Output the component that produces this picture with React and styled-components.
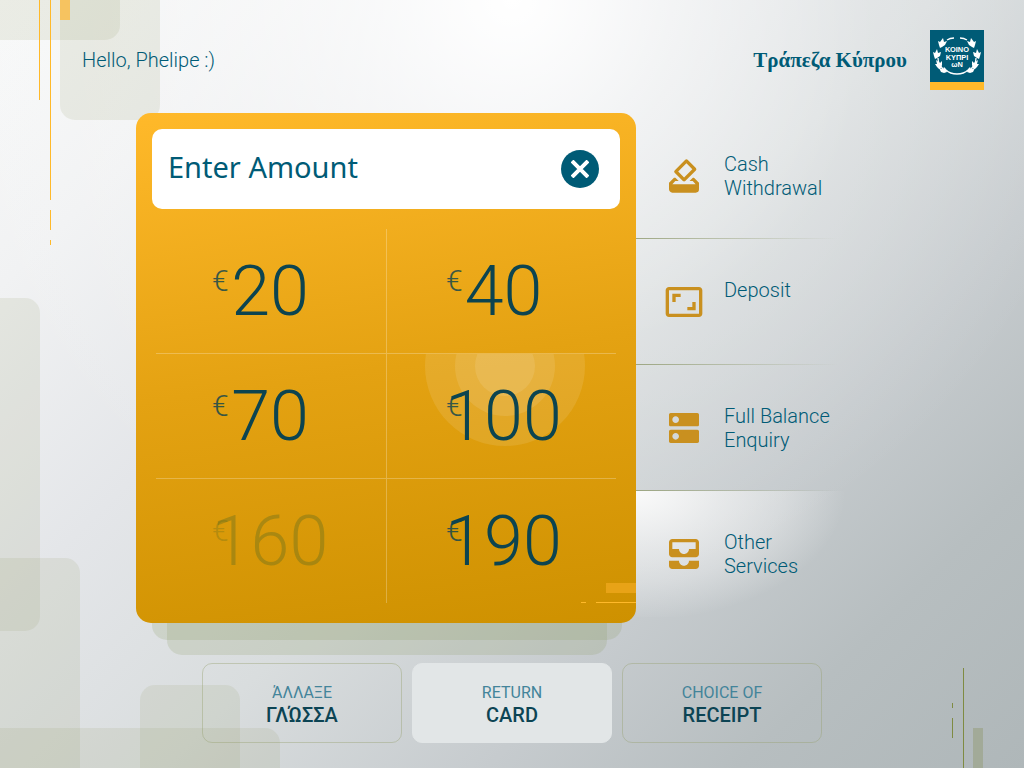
import React, { useState } from "react";
import styled, { createGlobalStyle } from "styled-components";
import {
  MdHowToVote,
  MdAspectRatio,
  MdDns,
  MdAllInbox
} from "react-icons/md";

const GlobalStyle = createGlobalStyle`
  * {
    box-sizing: border-box;
  }
  body {
    margin: 0;
    font-family: Roboto, "Noto Sans", sans-serif;
    color: #005b76;
  }
  button,
  input {
    font-family: inherit;
    color: inherit;
    border: none;
    background: none;
    padding: 0;
    margin: 0;
  }
  button {
    cursor: pointer;
  }
`;

const Screen = styled.div`
  position: relative;
  isolation: isolate;
  overflow: hidden;
  min-height: 100vh;
  background: radial-gradient(
      circle at 50% 0,
      rgba(255, 255, 255, 1) 0%,
      rgba(255, 255, 255, 0.6) 160px,
      rgba(255, 255, 255, 0.2) 360px,
      rgba(255, 255, 255, 0) 600px
    ),
    linear-gradient(
      135deg,
      #f8f9f9 0%,
      #f1f2f3 16%,
      #e4e6e9 34%,
      #d9ddde 52%,
      #c6cbce 70%,
      #b7bec0 84%,
      #afb7b9 100%
    );
`;

/* corner artwork behind the page */
const Artwork = styled.svg`
  position: absolute;
  z-index: -1;
  ${props => (props.$right ? "right: 0;" : "left: 0;")}
  ${props => (props.$bottom ? "bottom: 0;" : "top: 0;")}
`;

const Header = styled.header`
  display: flex;
  justify-content: space-between;
  align-items: center;
  padding: 30px 40px 0 82px;
  margin-bottom: 23px;
`;
const Greeting = styled.p`
  margin: 0;
  font-size: 20px;
  font-weight: 300;
  line-height: 24px;
`;
const Brand = styled.div`
  display: flex;
  align-items: center;
  gap: 23px;
`;
const BrandName = styled.span`
  font-family: "Liberation Serif", serif;
  font-size: 21px;
  font-weight: 700;
  line-height: 24px;
`;
const Emblem = styled.svg`
  display: block;
  width: 54px;
  height: 60px;
`;

const Main = styled.main`
  display: flex;
  justify-content: center;
  align-items: flex-start;
`;
const CardWrap = styled.div`
  position: relative;
  isolation: isolate;
  flex: 0 1 500px;
  min-width: 0;
  &::before,
  &::after {
    content: "";
    position: absolute;
    z-index: -1;
    height: 60px;
    border-radius: 15px;
    background: rgba(140, 155, 100, 0.2);
  }
  &::before {
    left: 16px;
    right: 14px;
    bottom: -17px;
  }
  &::after {
    left: 31px;
    right: 29px;
    bottom: -32px;
  }
`;
const Card = styled.section`
  position: relative;
  isolation: isolate;
  overflow: hidden;
  padding: 16px;
  border-radius: 15px;
  background: linear-gradient(172deg, #ffb92a 0%, #e4a212 50%, #ce9100 100%);
`;
const AmountField = styled.label`
  display: flex;
  align-items: center;
  height: 80px;
  padding: 0 21px 0 16px;
  border-radius: 10px;
  background: #fff;
`;
const AmountInput = styled.input`
  flex: 1;
  width: 100%;
  min-width: 0;
  height: 40px;
  margin-bottom: 6px;
  outline: none;
  font-family: "Noto Sans", sans-serif;
  font-size: 29px;
  &::placeholder {
    color: #005b76;
    opacity: 1;
  }
`;
const ClearButton = styled.button`
  display: flex;
  flex: none;
  align-items: center;
  justify-content: center;
  width: 38px;
  height: 38px;
  border-radius: 50%;
  background: #005b76;
  color: #fff;
`;
const Amounts = styled.div`
  display: grid;
  grid-template-columns: 1fr 1fr;
  margin: 20px 4px 4px;
`;
const Currency = styled.span`
  position: absolute;
  left: 56px;
  top: 36px;
  font-size: 30px;
  line-height: 32px;
  opacity: 0.8;
`;
const Amount = styled.button`
  position: relative;
  overflow: hidden;
  height: 125px;
  padding-right: 2px;
  border-bottom: 1px solid rgba(255, 255, 255, 0.25);
  font-size: 70px;
  font-weight: 300;
  line-height: 80px;
  color: #0c4450;
  &:nth-child(even) {
    padding: 0 0 0 4px;
    border-left: 1px solid rgba(255, 255, 255, 0.25);
  }
  &:nth-child(even) ${Currency} {
    left: 59px;
  }
  &:nth-last-child(-n + 2) {
    border-bottom: none;
    height: 124px;
  }
  &:disabled {
    color: rgba(100, 110, 30, 0.4);
    cursor: default;
  }
`;
const Digits = styled.span`
  position: relative;
`;
const TouchRipple = styled.svg`
  position: absolute;
  inset: 0;
`;

const Menu = styled.nav`
  display: flex;
  flex-direction: column;
  flex: 0 1 252px;
`;
const MenuItem = styled.a`
  display: flex;
  align-items: center;
  gap: 20px;
  height: 126px;
  padding: 0 28px;
  color: inherit;
  text-decoration: none;
  border-bottom: 1px solid;
  border-image: linear-gradient(
      90deg,
      rgba(150, 160, 120, 0.9),
      rgba(150, 160, 120, 0) 80%
    )
    1;
  background: ${props =>
    props.$active
      ? "radial-gradient(ellipse 210px 130px at 0 0, #fafafa 0%, rgba(250, 250, 250, 0.6) 40%, rgba(250, 250, 250, 0.35) 70%, rgba(250, 250, 250, 0) 100%)"
      : "none"};
  &:last-child {
    border-bottom: none;
  }
  svg {
    flex: none;
    color: #c9901f;
  }
`;
const MenuLabel = styled.span`
  width: 110px;
  min-height: 48px;
  font-size: 20px;
  font-weight: 300;
  line-height: 24px;
`;

const Footer = styled.footer`
  display: flex;
  justify-content: center;
  gap: 10px;
  margin: 40px 0 25px;
`;
const ActionButton = styled.button`
  display: flex;
  flex-direction: column;
  align-items: center;
  justify-content: center;
  flex: 0 1 200px;
  height: 80px;
  padding-top: 4px;
  border-radius: 10px;
  border: 1px solid
    ${props => (props.$filled ? "#e2e6e7" : "rgba(150, 160, 110, 0.4)")};
  background: ${props => (props.$filled ? "#e2e6e7" : "none")};
`;
const ActionTop = styled.span`
  font-size: 16px;
  line-height: 20px;
  color: #43849a;
`;
const ActionBottom = styled.span`
  font-size: 20px;
  font-weight: 500;
  line-height: 24px;
  color: #0c4454;
`;

const amounts = [
  { value: 20 },
  { value: 40 },
  { value: 70 },
  { value: 100, pressed: true },
  { value: 160, disabled: true },
  { value: 190 }
];

const services = [
  { label: "Cash Withdrawal", icon: MdHowToVote },
  { label: "Deposit", icon: MdAspectRatio },
  { label: "Full Balance Enquiry", icon: MdDns },
  { label: "Other Services", icon: MdAllInbox, active: true }
];

const actions = [
  { top: "ΆΛΛΑΞΕ", bottom: "ΓΛΏΣΣΑ" },
  { top: "RETURN", bottom: "CARD", filled: true },
  { top: "CHOICE OF", bottom: "RECEIPT" }
];

// right half of the wreath, mirrored for the left half
const Branch = () => (
  <g>
    <path
      d="M30 8q4 0 7 2M46 28q0 6-5 11M38 40q-4 4-11 4"
      fill="none"
      stroke="#fff"
      strokeWidth="1.3"
    />
    <path d="M42 17l-3-2-2-4 3 1 1-4 3 4 2-1-1 4-1 3zM47 28l-3-2-1-4 3 1 1-4 2 4 2-1-1 4-1 3zM43 38l-1-3 0-4 2 2 4-3-1 4 2 0-2 3-2 2zM37 42l1-3 2-2 1 2 4-1-2 4-3 1z" />
  </g>
);

const BankEmblem = () => (
  <Emblem viewBox="0 0 54 60" role="img" aria-label="Bank of Cyprus">
    <rect width="54" height="52" fill="#005b76" />
    <rect y="52" width="54" height="8" fill="#ffb92a" />
    <g fill="#fff">
      <Branch />
      <g transform="translate(54 0) scale(-1 1)">
        <Branch />
      </g>
      <g
        fontFamily="Liberation Sans, sans-serif"
        fontWeight="700"
        fontSize="7.4"
        textAnchor="middle"
      >
        <text x="27" y="22">
          ΚΟΙΝΟ
        </text>
        <text x="27" y="30">
          ΚΥΠΡΙ
        </text>
        <text x="27" y="37">
          ωΝ
        </text>
      </g>
    </g>
  </Emblem>
);

const CornerArt = () => (
  <>
    <Artwork width="160" height="631" aria-hidden="true">
      <g fill="rgb(156, 160, 112)" fillOpacity="0.15">
        <rect x="-20" y="-20" width="140" height="60" rx="15" />
        <rect x="60" y="-20" width="100" height="140" rx="15" />
        <rect x="-20" y="298" width="60" height="333" rx="15" />
      </g>
      <path fill="#f6c360" d="M60 0h10v20h-10z" />
      <path
        fill="#ffb92a"
        d="M39 0h1v100h-1zM50 0h1v200h-1zM50 210h1v20h-1zM50 240h1v5h-1z"
      />
    </Artwork>
    <Artwork $bottom width="280" height="210" aria-hidden="true">
      <g fill="rgb(156, 160, 112)" fillOpacity="0.15">
        <rect x="-20" y="0" width="100" height="230" rx="15" />
        <rect x="140" y="127" width="100" height="100" rx="15" />
        <rect x="-20" y="170" width="300" height="60" rx="15" />
      </g>
    </Artwork>
    <Artwork $bottom $right width="72" height="100" aria-hidden="true">
      <path fill="#a2aa98" d="M21 60h10v40h-10z" />
      <path fill="#7f8b42" d="M11 0h1v100h-1zM0 35h1v5h-1zM0 50h1v20h-1z" />
    </Artwork>
  </>
);

const CardArt = () => (
  <Artwork $bottom $right width="55" height="40" aria-hidden="true">
    <path fill="#e8a317" d="M25 0h30v10h-30z" />
    <path fill="#ffb92a" d="M0 19h5v1h-5zM15 19h40v1h-40z" />
  </Artwork>
);

const Ripple = () => (
  <TouchRipple width="100%" height="100%" aria-hidden="true">
    <g fill="#fff" fillOpacity="0.1">
      <circle cx="118" cy="12" r="80" />
      <circle cx="118" cy="12" r="50" />
      <circle cx="118" cy="12" r="30" />
    </g>
  </TouchRipple>
);

const App = () => {
  const [value, setValue] = useState("");

  return (
    <Screen>
      <GlobalStyle />
      <CornerArt />
      <Header>
        <Greeting>Hello, Phelipe :)</Greeting>
        <Brand>
          <BrandName>Τράπεζα Κύπρου</BrandName>
          <BankEmblem />
        </Brand>
      </Header>
      <Main>
        <CardWrap>
          <Card>
            <AmountField>
              <AmountInput
                aria-label="Enter Amount"
                placeholder="Enter Amount"
                value={value}
                onChange={e => setValue(e.target.value)}
              />
              <ClearButton aria-label="Clear" onClick={() => setValue("")}>
                <svg width="18" height="18" viewBox="0 0 18 18">
                  <path
                    d="M1 1L17 17M17 1L1 17"
                    stroke="currentColor"
                    strokeWidth="4"
                  />
                </svg>
              </ClearButton>
            </AmountField>
            <Amounts>
              {amounts.map(item => (
                <Amount
                  key={item.value}
                  disabled={item.disabled}
                  onClick={() => setValue(String(item.value))}
                >
                  {item.pressed && <Ripple />}
                  <Currency>€</Currency>
                  <Digits>{item.value}</Digits>
                </Amount>
              ))}
            </Amounts>
            <CardArt />
          </Card>
        </CardWrap>
        <Menu>
          {services.map(({ label, icon: Icon, active }) => (
            <MenuItem key={label} href="#" $active={active}>
              <Icon size={40} />
              <MenuLabel>{label}</MenuLabel>
            </MenuItem>
          ))}
        </Menu>
      </Main>
      <Footer>
        {actions.map(action => (
          <ActionButton key={action.bottom} $filled={action.filled}>
            <ActionTop>{action.top}</ActionTop>
            <ActionBottom>{action.bottom}</ActionBottom>
          </ActionButton>
        ))}
      </Footer>
    </Screen>
  );
};

export default App;
